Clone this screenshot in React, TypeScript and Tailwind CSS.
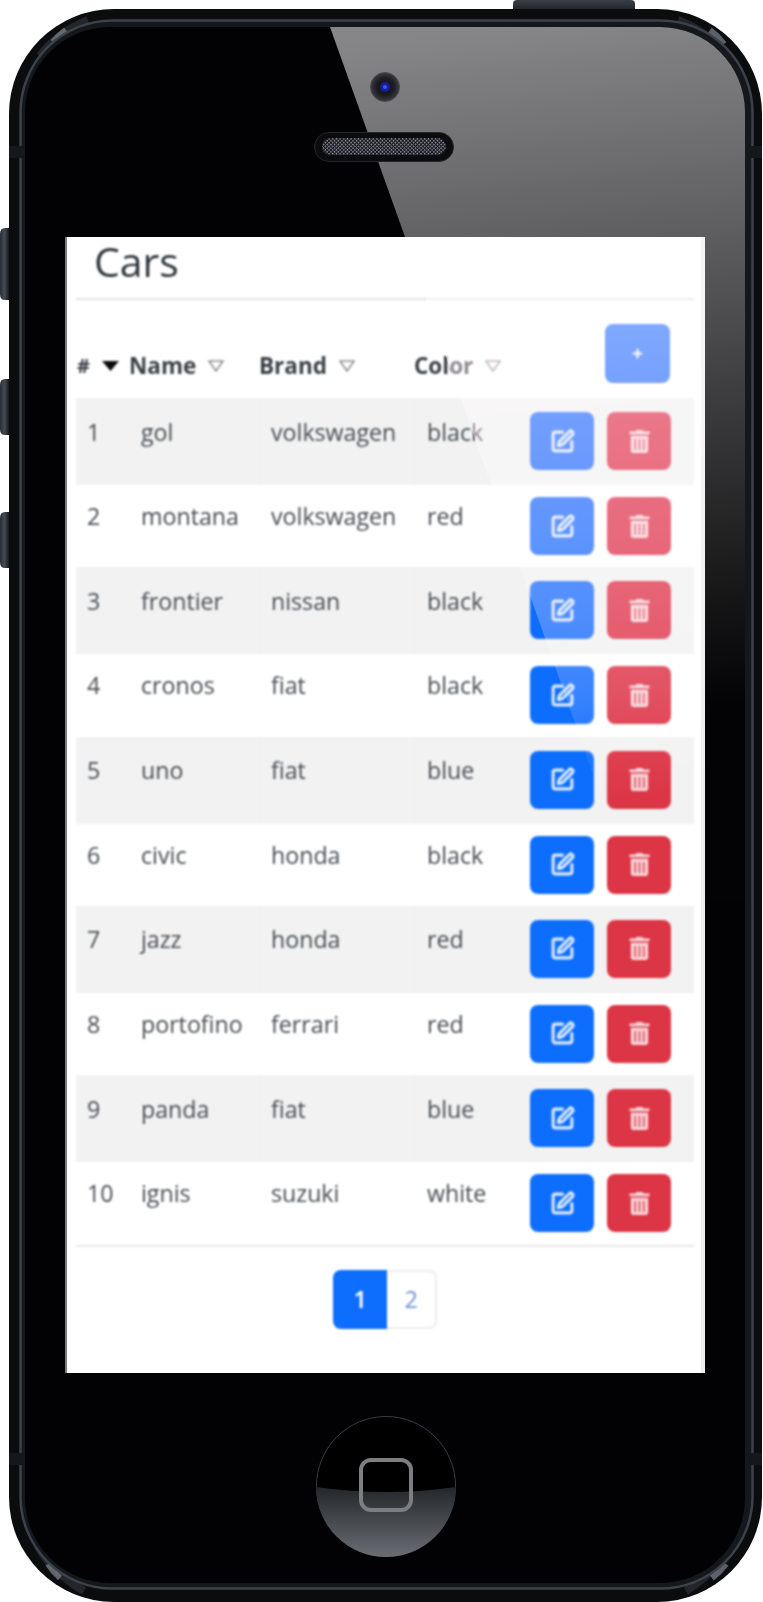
import React from "react";
import { SquarePen } from "lucide-react";
import { FaPlus, FaTrashAlt } from "react-icons/fa";

const cars = [
  [1, "gol", "volkswagen", "black"],
  [2, "montana", "volkswagen", "red"],
  [3, "frontier", "nissan", "black"],
  [4, "cronos", "fiat", "black"],
  [5, "uno", "fiat", "blue"],
  [6, "civic", "honda", "black"],
  [7, "jazz", "honda", "red"],
  [8, "portofino", "ferrari", "red"],
  [9, "panda", "fiat", "blue"],
  [10, "ignis", "suzuki", "white"],
] as const;

const cols = "grid grid-cols-[53px_130px_155px_105px_1fr]";

function Bezel() {
  return (
    <svg className="absolute left-0 top-0" width="763" height="1602" viewBox="0 0 763 1602">
      <defs>
        <linearGradient id="glass" gradientUnits="userSpaceOnUse" x1="500" y1="27" x2="570" y2="720">
          <stop offset="0" stopColor="#868588" />
          <stop offset="0.3" stopColor="#616163" />
          <stop offset="0.55" stopColor="#3e3e40" />
          <stop offset="0.8" stopColor="#1c1c1d" />
          <stop offset="1" stopColor="#030305" />
        </linearGradient>
        <linearGradient id="home" x1="0" y1="0" x2="0" y2="1">
          <stop offset="0" stopColor="#23262a" />
          <stop offset="1" stopColor="#6a6e74" />
        </linearGradient>
        <linearGradient id="key" x1="0" y1="0" x2="1" y2="0">
          <stop offset="0" stopColor="#2a2d34" />
          <stop offset="0.5" stopColor="#454a54" />
          <stop offset="1" stopColor="#16181c" />
        </linearGradient>
        <linearGradient id="topkey" x1="0" y1="0" x2="0" y2="1">
          <stop offset="0" stopColor="#3a3f48" />
          <stop offset="1" stopColor="#23262b" />
        </linearGradient>
        <radialGradient id="cam">
          <stop offset="0" stopColor="#0c0c10" />
          <stop offset="0.6" stopColor="#1d1d21" />
          <stop offset="1" stopColor="#3c3c40" />
        </radialGradient>
        <pattern id="mesh" width="2.6" height="2.6" patternUnits="userSpaceOnUse" patternTransform="rotate(45)">
          <rect width="2.6" height="2.6" fill="#16161b" />
          <rect width="1.5" height="1.5" fill="#8f8fa2" />
        </pattern>
        <clipPath id="inner">
          <rect x="25" y="27" width="720" height="1556" rx="85" />
        </clipPath>
      </defs>

      <path d="M513 9V4q0-4 4-4h114q4 0 4 4v5z" fill="url(#topkey)" />
      <path d="M9 228H5q-5 0-5 6v60q0 6 5 6h4z" fill="url(#key)" />
      <path d="M9 379H5q-5 0-5 6v44q0 6 5 6h4z" fill="url(#key)" />
      <path d="M9 512H5q-5 0-5 6v44q0 6 5 6h4z" fill="url(#key)" />

      <rect x="9" y="9" width="753" height="1593" rx="105" fill="#0b0c0e" />

      <g fill="none" stroke="#5a5f6a" strokeWidth="8" opacity="0.3">
        <path d="M40 56Q58 32 88 20" />
        <path d="M678 20Q708 32 728 56" />
        <path d="M38 1546Q52 1572 84 1591" />
        <path d="M686 1591Q716 1572 732 1546" />
      </g>
      <g fill="none" stroke="#7f8490" strokeWidth="6" opacity="0.7">
        <path d="M53 42Q58 36 66 30" />
        <path d="M710 30Q718 36 724 44" />
        <path d="M48 1564Q53 1572 60 1578" />
        <path d="M712 1578Q720 1572 726 1564" />
      </g>

      <rect x="20.5" y="20.5" width="732" height="1568" rx="92" fill="#14171b" stroke="#3c414b" strokeWidth="2.5" />
      <rect x="9" y="146" width="16" height="12" fill="#15181b" />
      <rect x="745" y="146" width="17" height="12" fill="#15181b" />
      <rect x="9" y="1453" width="16" height="12" fill="#15181b" />
      <rect x="745" y="1453" width="17" height="12" fill="#15181b" />

      <rect x="25" y="27" width="720" height="1556" rx="85" fill="#020204" />
      <polygon points="330,27 745,27 745,900 642,900" fill="url(#glass)" clipPath="url(#inner)" />

      <circle cx="385" cy="87" r="14.5" fill="url(#cam)" stroke="#4a4a4e" strokeWidth="1" />
      <circle cx="385" cy="87" r="5" fill="#16209a" />
      <circle cx="385" cy="87" r="2" fill="#3a55e8" />

      <rect x="314.5" y="132.5" width="139" height="29" rx="14.5" fill="#0c0c0e" stroke="#26262a" strokeWidth="1" />
      <rect x="322" y="138" width="124" height="17" rx="8.5" fill="url(#mesh)" />

      <circle cx="386" cy="1486" r="69.5" fill="#000" stroke="#3a3c40" strokeWidth="1" />
      <path d="M316 1487Q386 1497 456 1487A70 70 0 0 1 316 1487Z" fill="url(#home)" />
      <rect x="361" y="1460" width="50" height="50" rx="10" fill="none" stroke="#7d7e82" strokeWidth="4" />
    </svg>
  );
}

function Glare() {
  return (
    <svg className="pointer-events-none absolute left-0 top-0 mix-blend-screen" width="763" height="1602" viewBox="0 0 763 1602">
      <defs>
        <linearGradient id="glare" gradientUnits="userSpaceOnUse" x1="600" y1="300" x2="640" y2="800">
          <stop offset="0" stopColor="rgb(125,108,116)" />
          <stop offset="0.3" stopColor="rgb(100,78,88)" />
          <stop offset="0.6" stopColor="rgb(72,58,65)" />
          <stop offset="0.78" stopColor="rgb(45,38,42)" />
          <stop offset="0.92" stopColor="rgb(15,12,14)" />
          <stop offset="1" stopColor="rgb(0,0,0)" />
        </linearGradient>
      </defs>
      <polygon points="404,237 705,237 705,820 609,820" fill="url(#glare)" />
    </svg>
  );
}

function Tri({ filled }: { filled?: boolean }) {
  return filled ? (
    <svg width="17" height="10" viewBox="0 0 17 10" className="shrink-0">
      <polygon points="0,0 17,0 8.5,10" fill="#0b0b0b" />
    </svg>
  ) : (
    <svg width="16" height="12" viewBox="0 0 16 12" className="shrink-0">
      <polygon points="1,1 15,1 8,11" fill="none" stroke="#8d8d8d" strokeWidth="1.5" />
    </svg>
  );
}

function Head({ label }: { label: string }) {
  return (
    <div className="flex h-full items-center gap-[12px] pt-[33px] text-[22.5px] font-bold text-[#3a4046]">
      <span>{label}</span>
      <Tri />
    </div>
  );
}

export default function App() {
  return (
    <div className="relative h-[1602px] w-[763px] overflow-hidden bg-white pl-[65px] pt-[237px] font-['Open_Sans',sans-serif]">
      <Bezel />
      <div className="relative h-[1136px] w-[640px] border-l-[2px] border-r-[4px] border-l-[#7d7d7d] border-r-[#eeeeee] bg-white">
        <div className="h-full pl-[9px] pr-[7px] blur-[1px]">
          <div className="flex h-[61px] items-center pb-[12px] pl-[18px] text-[41px] leading-none text-[#2f363e]">Cars</div>
          <div className="h-[2px] bg-[#e2e2e2]" />

          <div className={`${cols} h-[98px]`}>
            <div className="flex h-full items-center gap-[12px] pl-[1px] pt-[33px] text-[20px] font-bold text-[#3a4046]">
              <span>#</span>
              <Tri filled />
            </div>
            <Head label="Name" />
            <Head label="Brand" />
            <Head label="Color" />
            <div className="flex items-start justify-end pr-[24px] pt-[24px]">
              <button className="flex h-[59px] w-[65px] items-center justify-center rounded-[8px] bg-[#0d6efd] text-white">
                <FaPlus size={11} />
              </button>
            </div>
          </div>

          {cars.map(([id, name, brand, color], i) => {
            const striped = i % 2 === 0;
            return (
              <div key={id} className={`${cols} text-[23.2px] text-[#474c52] ${striped ? "h-[87px] bg-[#f2f2f2]" : "h-[82.34px] bg-white"}`}>
                <div className={`pl-[11px] ${striped ? "pt-[16.5px]" : "pt-[14px]"}`}>{id}</div>
                <div className={`pl-[12px] ${striped ? "pt-[16.5px]" : "pt-[14px]"}`}>{name}</div>
                <div className={`pl-[12px] ${striped ? "pt-[16.5px] shadow-[inset_1px_0_0_#eeeeee]" : "pt-[14px]"}`}>{brand}</div>
                <div className={`pl-[13px] ${striped ? "pt-[16.5px] shadow-[inset_1px_0_0_#eeeeee]" : "pt-[14px]"}`}>{color}</div>
                <div className={`flex items-start gap-[13px] pl-[11px] ${striped ? "pt-[14px]" : "pt-[12px]"}`}>
                  <button className="flex h-[58px] w-[64px] items-center justify-center rounded-[8px] bg-[#0d6efd] text-white/85">
                    <SquarePen size={25} strokeWidth={2.9} />
                  </button>
                  <button className="flex h-[58px] w-[64px] items-center justify-center rounded-[8px] bg-[#dc3545] text-white/80">
                    <FaTrashAlt size={23} />
                  </button>
                </div>
              </div>
            );
          })}

          <div className="h-[2px] bg-[#e8e8e8]" />

          <div className="mt-[23px] flex justify-center">
            <button className="flex h-[59px] w-[54px] items-center justify-center rounded-l-[8px] bg-[#0d6efd] text-[23px] font-semibold text-white">1</button>
            <button className="flex h-[59px] w-[50px] items-center justify-center rounded-r-[8px] border-[2px] border-l-0 border-[#eeeeee] bg-white text-[23px] text-[#6f94dc]">2</button>
          </div>
        </div>
      </div>
      <Glare />
    </div>
  );
}
